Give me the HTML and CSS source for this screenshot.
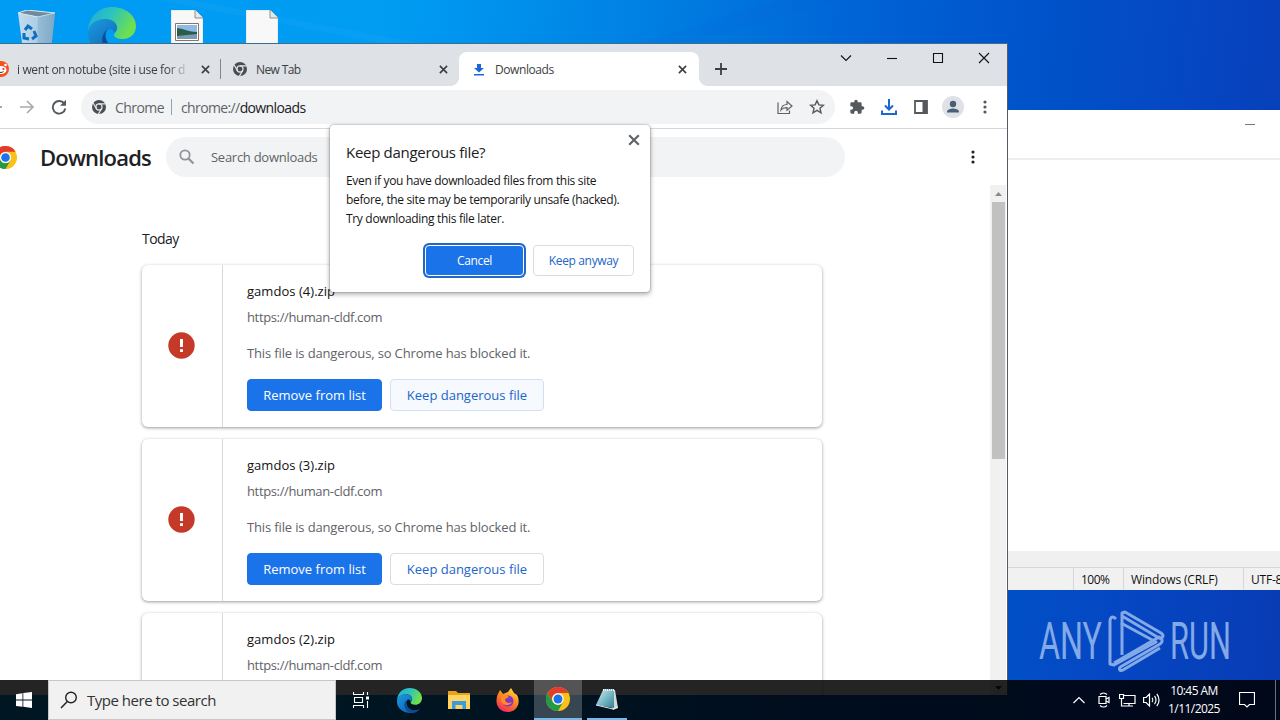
FILE: index.html
```html
<!DOCTYPE html>
<html lang="en">
<head>
<meta charset="utf-8">
<title>Downloads</title>
<link rel="stylesheet" href="styles.css">
</head>
<body>
<svg class="defs" width="0" height="0">
  <defs>
    <linearGradient id="eb" x1="0" y1="0" x2="1" y2="1"><stop offset="0" stop-color="#1b9de2"/><stop offset="1" stop-color="#0c4fa0"/></linearGradient>
    <linearGradient id="eg" x1="0" y1="0" x2="1" y2=".4"><stop offset="0" stop-color="#21a7e0"/><stop offset=".5" stop-color="#2cc4bd"/><stop offset="1" stop-color="#6ee04c"/></linearGradient>
    <linearGradient id="ff" x1="0.8" y1="0" x2=".3" y2="1"><stop offset="0" stop-color="#ffe14a"/><stop offset=".45" stop-color="#ff8a1e"/><stop offset="1" stop-color="#f22a5c"/></linearGradient>
    <linearGradient id="np" x1="0" y1="0" x2="1" y2="1"><stop offset="0" stop-color="#d9f1f4"/><stop offset=".5" stop-color="#7dbcc8"/><stop offset="1" stop-color="#2f8292"/></linearGradient>
    <linearGradient id="bin" x1="0" y1="0" x2="1" y2="0"><stop offset="0" stop-color="#c3dced"/><stop offset=".6" stop-color="#a9cbe3"/><stop offset="1" stop-color="#7fa9c7"/></linearGradient>
    <symbol id="edge" viewBox="0 0 48 48">
      <path d="M0 25C0 10 11 0 24 0c14 0 24 9 24 19 0 8-6 13-13 13-6 0-9-2-9-4s3-3 3-7c0-5-5-9-12-9C10 12 1 17 0 25z" fill="url(#eg)"/>
      <path d="M0 25C1 16 9 12 17 12c8 0 13 5 12 10-1 2-2 3-3 4-1-4-4-5-6-3-4 4-2 12 4 17 6 5 14 4 20 0-5 6-12 8-18 8C11 48-1 38 0 25z" fill="url(#eb)"/>
      <path d="M20 22c-5 4-3 13 4 18 6 4 14 4 20 0-6 8-15 10-22 6-10-6-10-19-2-24z" fill="#0b4c94"/>
    </symbol>
    <symbol id="chrome" viewBox="0 0 48 48">
      <circle cx="24" cy="24" r="24" fill="#fbc116"/>
      <path d="M3.2 12A24 24 0 0 1 44.8 12H24a12 12 0 0 0-10.4 18z" fill="#e33b2e"/>
      <path d="M3.2 12A24 24 0 0 0 24 48l10.4-18a12 12 0 0 1-20.8 0z" fill="#229a48"/>
      <circle cx="24" cy="24" r="11.5" fill="#fff"/><circle cx="24" cy="24" r="9" fill="#1a73e8"/>
    </symbol>
    <symbol id="chromegray" viewBox="0 0 48 48">
      <circle cx="24" cy="24" r="24" fill="#4a4e53"/>
      <g stroke="#e4e7ea" stroke-width="4" fill="none"><circle cx="24" cy="24" r="10.5"/><path d="M24 13.5h22M15 29.5L4 10.5M33 29.5L22 48.500"/></g>
    </symbol>
    <symbol id="x" viewBox="0 0 10 10"><path d="M1 1l8 8M9 1L1 9" fill="none" stroke="currentColor" stroke-width="1.800"/></symbol>
    <symbol id="dots" viewBox="0 0 4 14"><circle cx="2" cy="2" r="1.6"/><circle cx="2" cy="7" r="1.6"/><circle cx="2" cy="12" r="1.6"/></symbol>
  </defs>
</svg>

<main class="desktop">
  <svg class="rays" width="1280" height="43"><path d="M190 0L420 43H380L160 0z" fill="#2fb0fb" opacity=".15"/><path d="M640 43L780 0h60L690 43z" fill="#0a60e0" opacity=".12"/></svg>
  <div class="shortcuts">
    <svg width="38" height="40" viewBox="0 0 38 40"><path d="M0 3l19 3 18-3-4 37H5z" fill="url(#bin)"/><path d="M0 3L9 0l28 3-17 4z" fill="#6f8b9c" stroke="#dcebf5" stroke-width="1"/><path d="M20 7l17-4-4 37H19z" fill="#7ba6c4" opacity=".45"/><g fill="none" stroke="#0d70c0" stroke-width="3"><path d="M7 20l3-4 4 3M16 21l2 5-4 3M11 29l-5-1 0-5"/></g></svg>
    <svg width="48" height="48"><use href="#edge"/></svg>
    <svg width="32" height="36" viewBox="0 0 32 36"><path d="M0 0h24l8 8v28H0z" fill="#f8f8f8" stroke="#c9cdd1" stroke-width=".6"/><path d="M24 0v8h8" fill="#e8e8e8" stroke="#777" stroke-width=".8"/><path d="M4.500 13.500h23v17h-23z" fill="#fff" stroke="#8b7464"/><path d="M6 15h20v8H6z" fill="#8ebbe4"/><path d="M6 18c8 1 12 4 20 4v7H6z" fill="#2c5b4a"/><path d="M6 26l20-2v5H6z" fill="#789cb2"/></svg>
    <svg width="32" height="36" viewBox="0 0 32 36"><path d="M0 0h24l8 8v28H0z" fill="#f8f8f8" stroke="#c9cdd1" stroke-width=".6"/><path d="M24 0v8h8" fill="#e8e8e8" stroke="#777" stroke-width=".8"/></svg>
  </div>

  <svg class="brand" width="220" height="74" viewBox="0 0 220 74">
    <g class="brand-text"><text x="3" y="54" textLength="63" lengthAdjust="spacingAndGlyphs">ANY</text><text x="134" y="54" textLength="61" lengthAdjust="spacingAndGlyphs">RUN</text></g>
    <g fill="none" stroke="#83a9e6" stroke-width="3" stroke-linejoin="round"><path d="M80 14c-4-4-6-1-6 2v43l4 1 42-23-35-19"/><path d="M86 50V8l3-1 36 21c4 3 1 6-2 5L86 11"/><path d="M78 58l45-26c4 2 4 5 1 7L86 61c-4 2-3 6 1 4l37-22"/></g>
  </svg>

  <section class="notepad">
    <div class="np-title"><i></i></div>
    <div class="np-body"></div>
    <div class="np-scroll"></div>
    <div class="np-status"><span class="st0"></span><span class="st1">100%</span><span class="st2">Windows (CRLF)</span><span class="st3">UTF-8</span></div>
  </section>

  <section class="browser">
    <div class="tabstrip">
      <div class="tab tab-a">
        <svg class="reddit" width="16" height="16" viewBox="0 0 16 16"><circle cx="8" cy="8" r="8" fill="#f4511e"/><ellipse cx="8" cy="9" rx="5.500" ry="4" fill="#fff"/><circle cx="12.500" cy="4" r="1.300" fill="#fff"/><circle cx="6" cy="8" r="1" fill="#e33"/><circle cx="10.500" cy="8" r="1.100" fill="#d32"/><path d="M5.500 10.500c1.500 1.300 3.500 1.300 5 0" stroke="#333" fill="none"/></svg>
        <span class="label">i went on notube (site i use for d</span>
        <svg class="cx" width="9" height="9"><use href="#x"/></svg>
      </div>
      <div class="tab tab-b">
        <svg width="14" height="14"><use href="#chromegray"/></svg>
        <span class="label">New Tab</span>
        <svg class="cx" width="9" height="9"><use href="#x"/></svg>
      </div>
      <div class="tab tab-c">
        <svg width="12" height="13" viewBox="0 0 12 13"><path d="M4 1h4v4h3L6 9.500 1 5h3zM1 11h10v1.500H1z" fill="#1967d2"/></svg>
        <span class="label">Downloads</span>
        <svg class="cx" width="9" height="9"><use href="#x"/></svg>
      </div>
      <svg class="plus" width="12" height="12" viewBox="0 0 12 12"><path d="M6 0v12M0 6h12" stroke="#3c4043" stroke-width="1.800"/></svg>
      <div class="controls">
        <svg width="12" height="12" viewBox="0 0 12 12"><path d="M1 3.500l5 5 5-5"/></svg>
        <svg width="12" height="12" viewBox="0 0 12 12"><path d="M1 6.500h10"/></svg>
        <svg width="12" height="12" viewBox="0 0 12 12"><path d="M1.500 1.500h9v9h-9z"/></svg>
        <svg width="12" height="12" viewBox="0 0 12 12"><path d="M1 1l10 10M11 1L1 11"/></svg>
      </div>
    </div>

    <div class="toolbar">
      <svg class="fwd" width="36" height="16" viewBox="0 0 36 16"><path d="M0 8h2" stroke="#a5a8ab" stroke-width="1.800"/><path d="M20 8h13M27 2l6 6-6 6" fill="none" stroke="#a8abae" stroke-width="1.700"/></svg>
      <svg class="reload" width="16" height="16" viewBox="0 0 16 16"><path d="M13.500 5A6.300 6.300 0 1 0 14.300 9.500" fill="none" stroke="#55595d" stroke-width="1.900"/><path d="M15 .8v6H9z" fill="#55595d"/></svg>
      <div class="omnibox">
        <svg width="14" height="14"><use href="#chromegray"/></svg>
        <span class="scheme">Chrome</span><i class="bar"></i>
        <span class="url">chrome://<b>downloads</b></span>
        <svg class="share" width="16" height="16" viewBox="0 0 16 16"><path d="M1 3.500v11h11.500v-3M4 11c.5-4 2.500-5.500 6-5.500v-3L15 7l-5 4.300V8.600C7.500 8.500 5.500 9 4 11z" fill="none" stroke="#5f6368" stroke-width="1.200"/></svg>
        <svg class="star" width="16" height="16" viewBox="0 0 16 16"><path d="M8 1.700l1.900 4.200 4.500.4-3.400 3 1 4.500L8 11.400l-4 2.400 1-4.500-3.400-3 4.500-.4z" fill="none" stroke="#55595d" stroke-width="1.400"/></svg>
      </div>
      <div class="actions">
        <svg width="16" height="16" viewBox="0 0 24 24" fill="#55595d"><path d="M20.500 11H19V7a2 2 0 0 0-2-2h-4V3.500a2.500 2.500 0 0 0-5 0V5H4a2 2 0 0 0-2 2v3.800h1.500a2.700 2.700 0 0 1 0 5.400H2V20a2 2 0 0 0 2 2h3.800v-1.500a2.700 2.700 0 0 1 5.400 0V22H17a2 2 0 0 0 2-2v-4h1.500a2.500 2.500 0 0 0 0-5z"/></svg>
        <svg width="16" height="16" viewBox="0 0 16 16" fill="none" stroke="#1c65d3" stroke-width="2"><path d="M8 0v10M4 6.500l4 4 4-4M1 11.500V15h14v-3.500"/></svg>
        <svg width="14" height="14" viewBox="0 0 14 14"><path d="M1 1h12v12H1z" fill="none" stroke="#55595d" stroke-width="1.800"/><path d="M8.500 1H13v12H8.500z" fill="#55595d"/></svg>
        <svg width="22" height="22" viewBox="0 0 22 22"><circle cx="11" cy="11" r="11" fill="#dee1e6"/><circle cx="11" cy="8" r="3.200" fill="#4b5e78"/><path d="M5 16.500v-1c0-2 4-3.100 6-3.100s6 1.100 6 3.100v1z" fill="#4b5e78"/></svg>
        <svg width="4" height="14" fill="#55595d"><use href="#dots"/></svg>
      </div>
    </div>

    <div class="page">
      <header class="page-head">
        <svg class="logo" width="23" height="23"><use href="#chrome"/></svg>
        <h1>Downloads</h1>
        <div class="search"><svg width="16" height="16" viewBox="0 0 16 16"><circle cx="6" cy="6" r="4.700" fill="none" stroke="#909499" stroke-width="1.800"/><path d="M9.500 9.500l5 5" stroke="#909499" stroke-width="2.200"/></svg><span>Search downloads</span></div>
        <svg class="menu" width="4" height="14" fill="#202124"><use href="#dots"/></svg>
      </header>
      <div class="list-area">
        <div class="list">
          <h2>Today</h2>
          <article class="card">
            <div class="side"><svg width="27" height="27" viewBox="0 0 27 27"><circle cx="13.500" cy="13.500" r="13.200" fill="#c53929"/><path d="M12 7h3v8h-3zM12 17.200h3v2.800h-3z" fill="#fff"/></svg></div>
            <div class="info"><div class="file">gamdos (4).zip</div><div class="src">https://human-cldf.com</div><div class="warn">This file is dangerous, so Chrome has blocked it.</div><div class="btns"><span class="btn primary">Remove from list</span><span class="btn tint">Keep dangerous file</span></div></div>
          </article>
          <article class="card">
            <div class="side"><svg width="27" height="27" viewBox="0 0 27 27"><circle cx="13.500" cy="13.500" r="13.200" fill="#c53929"/><path d="M12 7h3v8h-3zM12 17.200h3v2.800h-3z" fill="#fff"/></svg></div>
            <div class="info"><div class="file">gamdos (3).zip</div><div class="src">https://human-cldf.com</div><div class="warn">This file is dangerous, so Chrome has blocked it.</div><div class="btns"><span class="btn primary">Remove from list</span><span class="btn">Keep dangerous file</span></div></div>
          </article>
          <article class="card">
            <div class="side"></div>
            <div class="info"><div class="file">gamdos (2).zip</div><div class="src">https://human-cldf.com</div></div>
          </article>
        </div>
        <div class="scrollbar"><svg width="7" height="4"><path d="M0 4l3.500-4L7 4z" fill="#8a8a8a"/></svg><i></i><svg class="down" width="7" height="4"><path d="M0 0l3.500 4L7 0z" fill="#303030"/></svg></div>
      </div>
    </div>
  </section>

  <section class="dialog">
    <svg class="close" width="12" height="12"><use href="#x"/></svg>
    <h3>Keep dangerous file?</h3>
    <p><span class="l1">Even if you have downloaded files from this site</span><br><span class="l2">before, the site may be temporarily unsafe (hacked).</span><br><span class="l3">Try downloading this file later.</span></p>
    <div class="dlg-btns"><span class="cancel"><em>Cancel</em></span><span class="keep"><em>Keep anyway</em></span></div>
  </section>

  <footer class="taskbar">
    <div class="start"><svg width="16" height="16" viewBox="0 0 16 16" fill="#fff"><path d="M0 2.200l6.500-1v6.400H0zM7.300 1.100L16 0v7.600H7.300zM0 8.400h6.500v6.400L0 13.900zM7.300 8.400H16V16l-8.700-1.200z"/></svg></div>
    <div class="tb-search"><svg width="18" height="18" viewBox="0 0 18 18"><circle cx="11" cy="6.500" r="5.300" fill="none" stroke="#222" stroke-width="1.400"/><path d="M7.300 10.500L1 17" stroke="#222" stroke-width="1.500"/></svg><span>Type here to search</span></div>
    <div class="apps">
      <span><svg width="16" height="16" viewBox="0 0 16 16" fill="none" stroke="#fff" stroke-width="1.100"><path d="M.5 0v2.500h10V0M1.500 5.500h8v5h-8zM.5 16v-2.500h10V16M14.500 0v3M14.500 9v7"/><path d="M13 6h3" stroke-width="3"/></svg></span>
      <span><svg width="25" height="25"><use href="#edge"/></svg></span>
      <span><svg width="22" height="18" viewBox="0 0 22 18"><path d="M0 0h8l2 2h12v16H0z" fill="#e8a21c"/><path d="M0 4h22v14H0z" fill="#ffd45f"/><path d="M4 10h14v8h-3.500v-4h-7v4H4z" fill="#3b9ae0"/></svg></span>
      <span><svg width="24" height="24" viewBox="0 0 24 24"><path d="M1 8L4 2l3 4 5-2 3-4 3 5 3 2c2 3 2 8 1 10-2 5-6 7-10 7C5 24 0 19 .5 12z" fill="url(#ff)"/><circle cx="12" cy="13" r="5.500" fill="#8136c5"/><path d="M5 7c3-2 6 0 8 2l-4 2c0 4 4 5 7 3-2 5-11 4-11-3z" fill="#ff8b22"/></svg></span>
      <span class="active"><svg width="24" height="24"><use href="#chrome"/></svg></span>
      <span class="open"><svg width="23" height="23" viewBox="0 0 23 23"><path d="M7 1l12 1 3 18-5 2z" fill="#d4d8d8"/><path d="M7 2l11-1 0 19-18-3z" fill="url(#np)"/><path d="M7 2h12" stroke="#eef" stroke-width="2" stroke-dasharray="1 1"/><path d="M0 17l17 4 5-2" stroke="#e6eced" fill="none"/></svg></span>
    </div>
    <div class="tray">
      <svg width="12" height="8" viewBox="0 0 12 8"><path d="M.5 7L6 1.500 11.500 7"/></svg>
      <svg class="cam" width="12" height="16" viewBox="0 0 12 16"><path d="M2 2.500C4 .5 7 .5 9 2.500M2 13.500c2 2 5 2 7 0M1 4.500h7v7H1zM8 7l3-1.500v5L8 9"/></svg>
      <svg class="net" width="17" height="15" viewBox="0 0 17 15"><path d="M5 2.500h11v8H4.500M.5 1.500h4v4h-4zM2.500 5.500V13H14M10 10.500V13"/></svg>
      <svg class="vol" width="17" height="14" viewBox="0 0 17 14"><path d="M.6 4.500h2.500L6.500 1v12L3.100 9.500H.6zM9 5c1 1 1 3 0 4M11.500 3c2 2 2 6 0 8M13.800 1c3 3.500 3 8.500 0 12"/></svg>
      <div class="clock"><span>10:45 AM</span><span class="date">1/11/2025</span></div>
      <svg class="note" width="16" height="16" viewBox="0 0 16 16"><path d="M.5.500h15v12h-5L8 15l-2.500-2.500h-5z"/></svg>
      <i></i>
    </div>
  </footer>
</main>
</body>
</html>
```
FILE: styles.css
```css
* { box-sizing: border-box; }
body { margin: 0; font-family: "Open Sans", "Noto Sans", sans-serif; color: #202124; }
svg { display: block; flex: none; }
h1, h2, h3, p { margin: 0; font-weight: 400; }
span, h1, h2, h3 { white-space: nowrap; }
.defs { position: absolute; }
.desktop { position: relative; width: 1280px; height: 720px; overflow: hidden; background: linear-gradient(97deg, #009bf3 0%, #009df3 28%, #008feb 38%, #007be0 50%, #0060d4 65%, #0051c8 78%, #0646c2 88%, #083bb4 100%); }
.rays { position: absolute; left: 0; top: 0; }

.shortcuts { position: absolute; left: 18px; top: 7px; display: flex; gap: 0; align-items: flex-start; }
.shortcuts svg { margin-top: 3px; }
.shortcuts svg:nth-child(2) { margin: 0 0 0 32px; }
.shortcuts svg:nth-child(3) { margin-left: 35px; }
.shortcuts svg:nth-child(4) { margin-left: 43px; }

.brand { position: absolute; left: 1036px; top: 605px; }
.brand-text { font: 400 51px Roboto, sans-serif; fill: #83a9e6; }

.notepad { position: absolute; left: 1008px; top: 110px; width: 272px; height: 480px; background: #fff; display: flex; flex-direction: column; font-size: 12px; overflow: hidden; }
.np-title { height: 50px; border-bottom: 2px solid #eee; padding: 14px 25px; display: flex; justify-content: flex-end; }
.np-title i { width: 10px; height: 1px; background: #777; }
.np-body { flex: 1; }
.np-scroll { height: 16px; background: #f0f0f0; }
.np-status { height: 23px; background: #f1f1f1; border-top: 1px solid #d7d7d7; display: flex; line-height: 23px; color: #111; }
.np-status span { flex: none; border-left: 1px solid #d7d7d7; padding-left: 7px; }
.np-status .st0 { width: 65px; border: 0; }
.np-status .st1 { width: 50px; letter-spacing: -.5px; }
.np-status .st2 { width: 120px; letter-spacing: -.15px; }
.np-status .st3 { letter-spacing: -.2px; }

.browser { position: absolute; left: 0; top: 43px; width: 1008px; height: 652px; border-top: 1px solid #3d6c91; border-right: 1px solid #555b62; background: #fff; display: flex; flex-direction: column; overflow: hidden; }
.tabstrip { height: 42px; flex: none; background: #dee1e6; display: flex; align-items: center; font-size: 12px; color: #3c4043; padding-top: 8px; }
.tab { display: flex; align-items: center; height: 34px; flex: none; }
.tab .cx { margin-left: auto; }
.tab-a { width: 221px; padding-right: 11px; position: relative; }
.tab-a::after { content: ""; position: absolute; right: 0; top: 7px; width: 1px; height: 20px; background: #80868b; }
.reddit { margin-left: -7px; }
.tab-a .label { margin-left: 8px; width: 176px; letter-spacing: -.36px; -webkit-mask-image: linear-gradient(90deg, #000 150px, transparent 173px); mask-image: linear-gradient(90deg, #000 150px, transparent 173px); }
.tab-b { width: 238px; padding: 0 11px 0 12px; }
.tab-b .label { margin-left: 9px; letter-spacing: -.6px; }
.tab-c { width: 240px; background: #fff; border-radius: 8px 8px 0 0; padding: 0 12px 0 14px; position: relative; }
.tab-c::before, .tab-c::after { content: ""; position: absolute; bottom: 0; width: 8px; height: 8px; }
.tab-c::before { left: -8px; background: radial-gradient(circle at 0 0, transparent 7.5px, #fff 8px); }
.tab-c::after { right: -8px; background: radial-gradient(circle at 100% 0, transparent 7.500px, #fff 8px); }
.tab-c .label { margin-left: 10px; letter-spacing: -.42px; }
.plus { margin-left: 16px; }
.controls { margin: -22px 17px 0 auto; display: flex; gap: 34px; }
.controls svg { fill: none; stroke: #111; stroke-width: 1.1; }

.toolbar { height: 43px; flex: none; border-bottom: 1px solid #d5d7da; display: flex; align-items: center; }
.reload { margin-left: 15px; }
.omnibox { margin-left: 14px; width: 754px; height: 34px; border-radius: 17px; background: #f1f3f4; display: flex; align-items: center; padding: 0 10px 0 11px; font-size: 14px; color: #5f6368; }
.scheme { margin-left: 9px; width: 56px; letter-spacing: -.55px; }
.bar { width: 1px; height: 16px; background: #9aa0a6; }
.url { margin-left: 9px; letter-spacing: -.62px; }
.url b { font-weight: 400; color: #202124; }
.share { margin-left: auto; }
.star { margin-left: 16px; }
.actions { display: grid; grid-template-columns: repeat(5, 32px); width: 146px; margin-left: 6px; justify-items: center; align-items: center; }

.page { flex: 1; display: flex; flex-direction: column; }
.page-head { height: 56px; flex: none; display: flex; align-items: center; }
.logo { margin-left: -6px; }
h1 { margin-left: 23px; width: 126px; font-size: 22px; font-weight: 600; letter-spacing: -.8px; line-height: 30px; }
.search { width: 679px; height: 40px; border-radius: 20px; background: #f1f3f4; display: flex; align-items: center; padding-left: 13px; font-size: 13px; color: #5f6368; }
.search span { margin-left: 16px; letter-spacing: -.27px; }
.menu { margin-left: 126px; }
.list-area { height: 510px; display: flex; flex: none; }
.list { width: 680px; margin-left: 142px; }
h2 { font-size: 14px; line-height: 20px; margin-top: 44px; margin-bottom: 16px; letter-spacing: -.55px; }
.card { height: 162px; margin-bottom: 12px; border-radius: 6px; background: #fff; box-shadow: 0 1px 3px 1px #3c404333, 0 1px 2px #3c404340; display: flex; }
.side { width: 81px; border-right: 1px solid #d6d8db; display: flex; align-items: center; justify-content: center; }
.side svg { margin-top: -1px; margin-right: 1px; }
.info { padding: 16px 0 0 24px; font-size: 13px; }
.file { line-height: 20px; letter-spacing: .04px; color: #111; }
.src { line-height: 20px; margin-top: 6px; color: #5f6368; letter-spacing: -.36px; }
.warn { line-height: 20px; margin-top: 16px; color: #5f6368; letter-spacing: -.14px; }
.btns { display: flex; gap: 8px; margin-top: 16px; }
.btn { width: 154px; height: 32px; border-radius: 4px; border: 1px solid #dadce0; display: flex; align-items: center; justify-content: center; color: #1a66c9; }
.primary { width: 135px; background: #1a73e8; border-color: #1a73e8; color: #fff; }
.tint { background: #f6f9fe; border-color: #d2e0f5; }
.scrollbar { width: 16px; margin-left: auto; margin-right: 1px; background: #f1f1f1; display: flex; flex-direction: column; align-items: center; padding: 7px 0 5px; }
.scrollbar i { width: 13px; height: 257px; background: #c1c1c1; margin-top: 6px; }
.scrollbar .down { margin-top: auto; }

.dialog { position: absolute; left: 330px; top: 125px; width: 320px; height: 167px; background: #fff; border-radius: 4px; box-shadow: 0 0 1px 1px #3c404330, 0 2px 4px 1px #3c404355; padding: 16px 16px 0; }
.close { position: absolute; right: 10px; top: 9px; color: #5f6368; }
h3 { font-size: 15px; line-height: 22px; letter-spacing: -.3px; }
.dialog p { margin-top: 8px; font-size: 12px; line-height: 19px; color: #151515; }
.l1, .l3 { letter-spacing: -.32px; }
.l2 { letter-spacing: -.35px; }
.dlg-btns { display: flex; justify-content: flex-end; gap: 9px; margin-top: 17px; font-size: 12px; }
.dlg-btns span { display: flex; align-items: center; justify-content: center; height: 31px; border-radius: 4px; }
.dlg-btns em { font-style: normal; margin-top: -1px; letter-spacing: -.35px; }
.cancel { width: 99px; background: #1a73e8; color: #fff; border: 1px solid #fff; box-shadow: 0 0 0 2px #2268c8; }
.keep { width: 101px; border: 1px solid #dadce0; color: #1a66c9; }

.taskbar { position: absolute; left: 0; top: 680px; width: 1280px; height: 40px; display: flex; background: rgba(0, 0, 0, .86); color: #fff; }
.start { width: 48px; display: flex; align-items: center; justify-content: center; }
.tb-search { width: 288px; background: #f1f1f1; border: 1px solid #c6c6c6; color: #333; display: flex; align-items: center; padding-left: 11px; font-size: 15px; }
.tb-search span { margin-left: 9px; letter-spacing: -.48px; }
.apps { display: flex; }
.apps span { width: 49px; display: flex; align-items: center; justify-content: center; }
.apps span:first-child { width: 49px; }
.apps .active { width: 48px; margin-left: 2px; background: rgba(255, 255, 255, .22); border-bottom: 2px solid #76b9ed; }
.apps .open { width: 40px; margin-left: 5px; border-bottom: 2px solid #76b9ed; }
.tray { margin-left: auto; display: flex; align-items: center; }
.tray svg { fill: none; stroke: #fff; stroke-width: 1.2; }
.cam { margin-left: 13px; }
.net { margin-left: 9px; }
.vol { margin-left: 7px; }
.clock { width: 70px; margin-left: -1px; display: flex; flex-direction: column; align-items: center; font-size: 12px; line-height: 18px; letter-spacing: -.55px; }
.note { margin-left: 10px; }
.tray i { width: 1px; height: 40px; background: #697080; margin-left: 20px; margin-right: 4px; }
```
